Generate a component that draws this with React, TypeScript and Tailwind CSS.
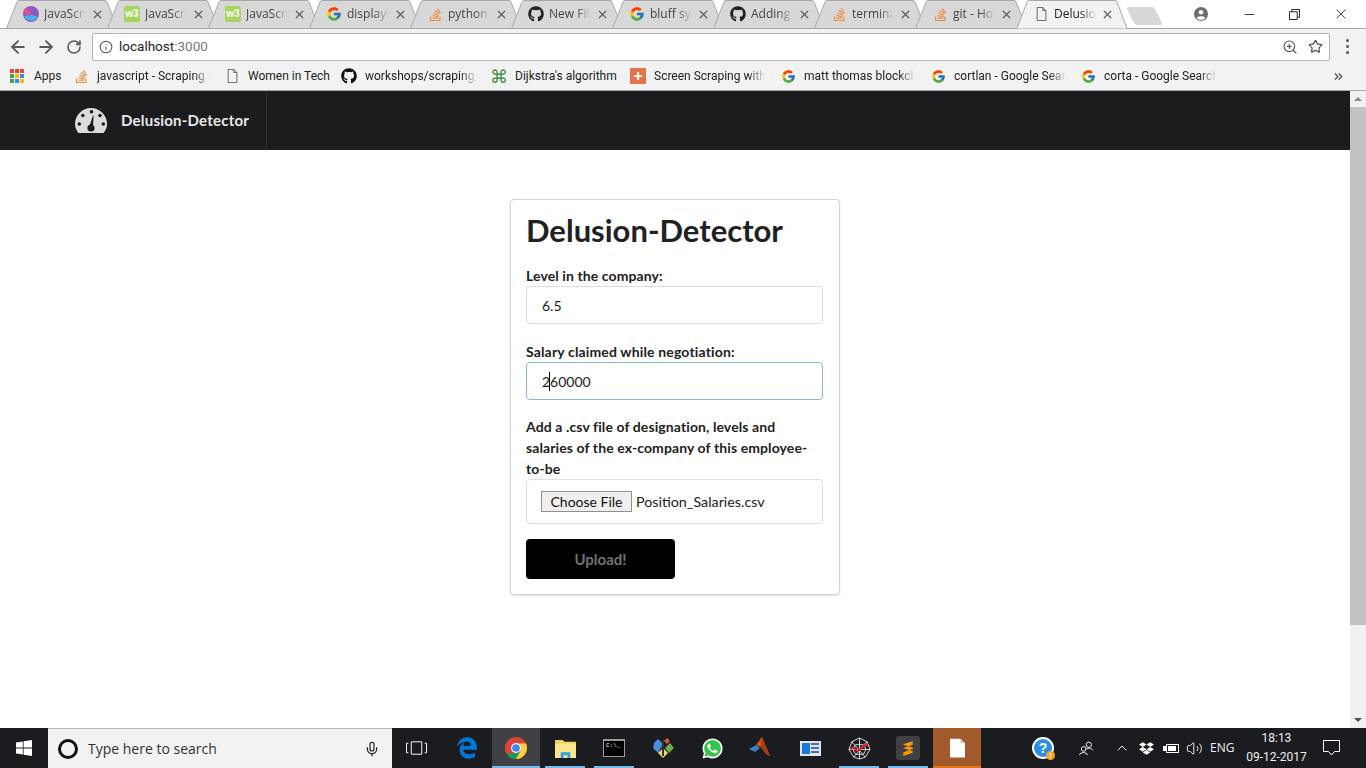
import type { ReactNode } from "react";
import { FaGithub, FaStackOverflow, FaWhatsapp, FaDropbox, FaEdgeLegacy } from "react-icons/fa";
import { FcGoogle } from "react-icons/fc";
import { ArrowLeft, ArrowRight, RotateCw, Info, ZoomIn, Star, X, Minus, Mic, ChevronUp, Volume2, ChevronsRight } from "lucide-react";

const W3 = () => (
  <span className="w-4 h-4 bg-[#a5d65f] rounded-[2px] flex items-center justify-center text-white text-[10px] font-bold leading-none font-['Liberation_Sans',sans-serif]">w3</span>
);

const Doc = ({ className }: { className: string }) => (
  <svg viewBox="0 0 12 16" className={className} fill="none" stroke="#555" strokeWidth="1">
    <path d="M1 .5h6.500L11 4v11.500H1z" />
    <path d="M7.500.5V4H11" />
  </svg>
);

const Chromium = ({ size }: { size: string }) => (
  <svg viewBox="0 0 24 24" className={size}>
    <circle cx="12" cy="12" r="12" fill="#db4437" />
    <path d="M12 12 1.600 18A12 12 0 0 0 12 24l6-6z" fill="#0f9d58" />
    <path d="M12 7h10.900A12 12 0 0 1 12 24l5-9z" fill="#ffcd40" />
    <path d="M1.600 6 7 15l5 3-10.400 0A12 12 0 0 1 1.600 6z" fill="#db4437" />
    <circle cx="12" cy="12" r="5.400" fill="#fff" />
    <circle cx="12" cy="12" r="4.200" fill="#4285f4" />
  </svg>
);

const Crystal = () => (
  <svg viewBox="0 0 16 16" className="w-4 h-4">
    <circle cx="8" cy="8" r="8" fill="#8e5bc4" />
    <path d="M1 10a8 8 0 0 0 14 1L9 9z" fill="#3fb4ea" />
    <path d="M4 1.500 8 7 3 9 0 7a8 8 0 0 1 4-5.500z" fill="#dd4f8a" />
  </svg>
);

type TabProps = { title: string; icon: ReactNode; active?: boolean };

const Tab = ({ title, icon, active }: TabProps) => (
  <div className={`relative w-[112px] h-[29px] -mr-[11px] shrink-0 ${active ? "z-10" : ""}`}>
    <svg viewBox="0 0 112 29" className="absolute inset-0 w-full h-full">
      <path
        d={active ? "M0 28.500h1L11 2q.6-1.500 2-1.500h86q1.500 0 2 1.500l10 26.500h1" : "M0.500 28.500 11 2q.6-1.500 2-1.500h86q1.500 0 2 1.500l10.500 26.500z"}
        fill={active ? "#f2f2f2" : "#d8d8d8"}
        stroke="#a8a8a8"
        strokeWidth="1"
      />
    </svg>
    <div className="relative flex items-center h-[28px] pl-[17px]">
      <span className="w-4 h-4 flex items-center justify-center shrink-0">{icon}</span>
      <span className={`ml-[5px] w-[42px] overflow-hidden whitespace-nowrap text-[12px] [mask-image:linear-gradient(to_right,#000_65%,transparent)] ${active ? "text-[#222]" : "text-[#444]"}`}>{title}</span>
      <X size={13} strokeWidth={2.5} className="ml-[5px] text-[#666] shrink-0" />
    </div>
  </div>
);

type MarkProps = { icon: ReactNode; label: string; className: string; fade?: boolean };

const Mark = ({ icon, label, className, fade }: MarkProps) => (
  <div className={`flex items-center shrink-0 ${className}`}>
    <span className="w-4 h-4 flex items-center justify-center shrink-0">{icon}</span>
    <span className={`ml-2 flex-1 overflow-hidden whitespace-nowrap text-[12px] text-[#222] font-['Roboto',sans-serif] ${fade ? "[mask-image:linear-gradient(to_right,#000_85%,transparent)]" : ""}`}>{label}</span>
  </div>
);

const TaskIcon = ({ children, className = "", bar }: { children: ReactNode; className?: string; bar?: string }) => (
  <div className={`relative w-[48px] mr-px h-full flex items-center justify-center shrink-0 ${className}`}>
    {children}
    {bar && <span className={`absolute bottom-0 h-[2px] ${bar}`} />}
  </div>
);

const Gauge = () => (
  <svg viewBox="0 0 32 25" className="w-8 h-[25px]">
    <path d="M3.500 25C1.300 22.300 0 19.300 0 16a16 16 0 0 1 32 0c0 3.300-1.300 6.300-3.500 9z" fill="#dcdcdc" />
    <g fill="#1b1c1d">
      <circle cx="16.500" cy="3.800" r="1.800" />
      <circle cx="7.800" cy="7.500" r="1.800" />
      <circle cx="25" cy="7.500" r="1.800" />
      <circle cx="4.300" cy="16" r="1.800" />
      <circle cx="28.300" cy="16" r="1.800" />
      <circle cx="16" cy="20" r="3.600" />
      <path d="M14.500 18 18 7.500l.6.2L18 19z" />
    </g>
  </svg>
);

const Field = ({ value, focused }: { value: string; focused?: boolean }) => (
  <div className="relative">
    <input
      readOnly
      value={value}
      className={`block w-full h-[38px] px-[15px] bg-white text-[14px] text-[#212121] rounded-[4px] border outline-none ${focused ? "border-[#85b7d9]" : "border-[#dededf]"}`}
    />
    {focused && <span className="absolute left-[23px] top-[10px] w-px h-[19px] bg-black" />}
  </div>
);

export default function App() {
  return (
    <div className="w-[1366px] h-[768px] overflow-hidden flex flex-col bg-white font-['Open_Sans',sans-serif]">
      {/* tab strip */}
      <div className="h-[28px] flex items-start pl-[6px] bg-white shrink-0 relative z-10">
        <Tab title="JavaScript" icon={<Crystal />} />
        <Tab title="JavaScript" icon={<W3 />} />
        <Tab title="JavaScript" icon={<W3 />} />
        <Tab title="displaying" icon={<FcGoogle size={16} />} />
        <Tab title="python" icon={<FaStackOverflow size={15} className="text-[#f08a3c]" />} />
        <Tab title="New File" icon={<FaGithub size={16} className="text-[#222]" />} />
        <Tab title="bluff sys" icon={<FcGoogle size={16} />} />
        <Tab title="Adding" icon={<FaGithub size={16} className="text-[#222]" />} />
        <Tab title="terminal" icon={<FaStackOverflow size={15} className="text-[#f08a3c]" />} />
        <Tab title="git - How" icon={<FaStackOverflow size={15} className="text-[#f08a3c]" />} />
        <Tab title="Delusion" icon={<Doc className="w-[11px] h-[14px]" />} active />
        <svg viewBox="0 0 36 18" className="w-9 h-[18px] mt-[7px] ml-[10px] shrink-0">
          <path d="M1 0h24q2 0 3 2l7 14q.5 2-1 2H10q-2 0-3-2L0 2q0-2 1-2z" fill="#d8d8d8" />
        </svg>
        <div className="ml-auto flex items-center h-[28px]">
          <svg viewBox="0 0 16 16" className="w-[14px] h-[14px] mr-[34px]">
            <circle cx="8" cy="8" r="8" fill="#6e6e6e" />
            <circle cx="8" cy="6" r="2.600" fill="#fff" />
            <path d="M3 12.500c1-2.500 9-2.500 10 0a6.500 6.500 0 0 1-10 0z" fill="#fff" />
          </svg>
          <Minus size={15} strokeWidth={1.2} className="text-black mr-[32px]" />
          <svg viewBox="0 0 12 12" className="w-[11px] h-[11px] mr-[33px]" fill="none" stroke="#111">
            <path d="M.5 3h8.500v8.500H.5z" />
            <path d="M3 3V.5h8.500V9H9" />
          </svg>
          <X size={16} strokeWidth={1.1} className="text-black mr-[17px]" />
        </div>
      </div>

      {/* toolbar */}
      <div className="h-[34px] pt-[2px] bg-[#f2f2f2] border-t border-[#a8a8a8] flex items-center shrink-0">
        <ArrowLeft size={20} strokeWidth={2.2} className="ml-[8px] text-[#5a5a5a]" />
        <ArrowRight size={20} strokeWidth={2.2} className="ml-[8px] text-[#5a5a5a]" />
        <RotateCw size={16} strokeWidth={2.4} className="ml-[10px] text-[#5a5a5a]" />
        <div className="ml-[10px] w-[1238px] h-[28px] bg-white border border-[#b4b4b4] rounded-[2px] flex items-center">
          <Info size={14} strokeWidth={1.8} className="ml-[6px] text-[#555]" />
          <span className="ml-[6px] text-[13.500px] text-[#222] font-['Roboto',sans-serif]">
            localhost<span className="text-[#777]">:3000</span>
          </span>
          <ZoomIn size={16} strokeWidth={1.7} className="ml-auto text-[#555]" />
          <Star size={15} strokeWidth={2} className="ml-[10px] mr-[6px] text-[#555]" />
        </div>
        <div className="ml-[16px] flex flex-col gap-[3px]">
          <span className="w-[3px] h-[3px] rounded-full bg-[#555]" />
          <span className="w-[3px] h-[3px] rounded-full bg-[#555]" />
          <span className="w-[3px] h-[3px] rounded-full bg-[#555]" />
        </div>
      </div>

      {/* bookmarks */}
      <div className="h-[29px] bg-[#f2f2f2] border-b border-[#a8a8a8] flex items-center pl-[10px] shrink-0">
        <div className="flex items-center w-[63px] shrink-0">
          <div className="grid grid-cols-3 gap-[1px] w-[14px]">
            <span className="h-[4px] bg-[#ea4335]" /><span className="h-[4px] bg-[#ea4335]" /><span className="h-[4px] bg-[#ea4335]" />
            <span className="h-[4px] bg-[#34a853]" /><span className="h-[4px] bg-[#fbbc05]" /><span className="h-[4px] bg-[#4285f4]" />
            <span className="h-[4px] bg-[#34a853]" /><span className="h-[4px] bg-[#4285f4]" /><span className="h-[4px] bg-[#fbbc05]" />
          </div>
          <span className="ml-[10px] text-[12px] text-[#222] font-['Roboto',sans-serif]">Apps</span>
        </div>
        <Mark className="w-[151px] pr-[14px]" fade icon={<FaStackOverflow size={15} className="text-[#f08a3c]" />} label="javascript - Scraping a" />
        <Mark className="w-[117px]" icon={<Doc className="w-[11px] h-[14px]" />} label="Women in Tech" />
        <Mark className="w-[150px] pr-[14px]" fade icon={<FaGithub size={16} className="text-[#111]" />} label="workshops/scraping_" />
        <Mark className="w-[139px] pr-[13px]" icon={<span className="text-[18px] leading-none text-[#3c8f3c]">⌘</span>} label="Dijkstra's algorithm" />
        <Mark
          className="w-[150px] pr-[15px]"
          fade
          icon={<span className="w-4 h-4 bg-[#e2764a] flex items-center justify-center text-white text-[16px] font-bold leading-none">+</span>}
          label="Screen Scraping with"
        />
        <Mark className="w-[150px] pr-[15px]" fade icon={<FcGoogle size={15} />} label="matt thomas blockchain" />
        <Mark className="w-[150px] pr-[14px]" fade icon={<FcGoogle size={15} />} label="cortlan - Google Search" />
        <Mark className="w-[136px]" fade icon={<FcGoogle size={15} />} label="corta - Google Search" />
        <ChevronsRight size={13} strokeWidth={2.4} className="ml-[116px] text-[#555]" />
      </div>

      {/* page */}
      <div className="flex-1 flex min-h-0">
        <div className="flex-1 flex flex-col min-w-0 font-['Lato',sans-serif]">
          <nav className="h-[59px] bg-[#1b1c1d] flex shrink-0">
            <div className="w-[267px] h-full border-r border-[#2f3031] pl-[75px] flex items-center">
              <Gauge />
              <span className="ml-[14px] text-[15px] tracking-[0.22px] font-bold text-[#e8e8e8]">Delusion-Detector</span>
            </div>
          </nav>
          <div className="flex justify-center pt-[49px]">
            <div className="w-[330px] h-[396px] pl-[15px] pr-[16px] pt-[10px] bg-white border border-[#d4d4d5] rounded-[4px] shadow-[0_1px_2px_rgba(34,36,38,0.15)] text-[#212121]">
              <h1 className="text-[31px] leading-[41px] font-bold">Delusion-Detector</h1>
              <label className="block mt-[16px] mb-[1px] text-[14px] tracking-[0.1px] leading-[18px] font-bold">Level in the company:</label>
              <Field value="6.5" />
              <label className="block mt-[19px] mb-[1px] text-[14px] tracking-[0.15px] leading-[18px] font-bold">Salary claimed while negotiation:</label>
              <Field value="260000" focused />
              <label className="block mt-[16px] -mr-[2px] text-[14px] tracking-[0.1px] leading-[21px] font-bold">
                Add a .csv file of designation, levels and
                <br />
                salaries of the ex-company of this employee-
                <br />
                to-be
              </label>
              <div className="h-[45px] border border-[#dededf] rounded-[4px] pl-[14px] flex items-center text-[14.300px]">
                <span className="h-[21px] w-[91px] flex items-center justify-center bg-[#efefef] border border-[#8f8f8f] text-[14px] text-[#111]">Choose File</span>
                <span className="ml-[4px]">Position_Salaries.csv</span>
              </div>
              <button className="block mt-[15px] w-[149px] h-[40px] bg-black rounded-[4px] text-[15px] font-bold text-white/45">Upload!</button>
            </div>
          </div>
        </div>

        {/* scrollbar */}
        <div className="w-4 bg-[#f1f1f1] flex flex-col items-center shrink-0">
          <div className="h-[16px] flex items-center justify-center">
            <span className="w-0 h-0 border-x-[4px] border-x-transparent border-b-[4px] border-b-[#8a8a8a]" />
          </div>
          <div className="w-full h-[518px] bg-[#c1c1c1]" />
          <div className="mt-auto h-[16px] flex items-center justify-center">
            <span className="w-0 h-0 border-x-[4px] border-x-transparent border-t-[4px] border-t-[#505050]" />
          </div>
        </div>
      </div>

      {/* taskbar */}
      <div className="h-[40px] bg-[#1b1c20] flex items-center shrink-0 text-white">
        <div className="w-[48px] h-full flex items-center justify-center shrink-0">
          <svg viewBox="0 0 16 16" className="w-4 h-4" fill="#fff">
            <path d="M0 2.400 6.800 1.400V7.600H0zM7.600 1.300 16 0V7.600H7.600zM0 8.400H6.800V14.600L0 13.600zM7.600 8.400H16V16L7.600 14.700z" />
          </svg>
        </div>
        <div className="w-[344px] h-full bg-[#f2f2f2] border-t border-[#b8b8b8] flex items-center pl-[10px] text-black shrink-0">
          <span className="w-[20px] h-[20px] rounded-full border-[3px] border-[#111]" />
          <span className="ml-[10px] text-[14px] text-[#333]">Type here to search</span>
          <Mic size={16} strokeWidth={1.8} className="ml-auto mr-[12px] text-[#222]" />
        </div>
        <TaskIcon>
          <svg viewBox="0 0 22 14" className="w-[21px] h-[14px]" fill="none" stroke="#fff">
            <path d="M5.500.5h11v13h-11zM2.500 2H.5v10h2M19.500 2h2v10h-2" />
          </svg>
        </TaskIcon>
        <TaskIcon className="ml-[2px]"><FaEdgeLegacy size={22} className="text-[#0078d7]" /></TaskIcon>
        <TaskIcon className="bg-[#404144]" bar="inset-x-0 bg-[#76b9ed]"><Chromium size="w-[22px] h-[22px]" /></TaskIcon>
        <TaskIcon bar="left-[4px] w-[40px] bg-[#76b9ed]">
          <svg viewBox="0 0 22 20" className="w-[21px] h-[19px]">
            <path d="M0 1h8l2 2h12v17H0z" fill="#f6d365" />
            <path d="M0 5h22v15H0z" fill="#fbe58f" />
            <path d="M6 14h10v6h-3v-3H9v3H6z" fill="#2f9fe0" />
          </svg>
        </TaskIcon>
        <TaskIcon bar="left-[4px] w-[40px] bg-[#76b9ed]">
          <div className="w-[22px] h-[18px] bg-black border border-[#9a9a9a] border-t-[2px] flex items-start pl-[2px] pt-[2px]">
            <span className="text-[6px] leading-none text-white font-['Liberation_Mono',monospace]">C:\_</span>
          </div>
        </TaskIcon>
        <TaskIcon>
          <svg viewBox="0 0 24 24" className="w-6 h-6">
            <path d="M12 8 7 3 3 7l-1 5 5 5z" fill="#4a90d9" />
            <path d="M12 12 7 17l5 5 5-5z" fill="#f3d36b" />
            <path d="M13 5l3-3 3 3-3 3z" fill="#d9534f" />
            <path d="M14 12l5-5 4 5-5 5z" fill="#6fae45" />
            <path d="M11 4h2v16h-2z" fill="#333" />
          </svg>
        </TaskIcon>
        <TaskIcon>
          <span className="relative w-[21px] h-[21px] flex items-center justify-center">
            <span className="absolute inset-[1px] rounded-full bg-[#35c44a]" />
            <FaWhatsapp size={23} className="text-white absolute" />
          </span>
        </TaskIcon>
        <TaskIcon>
          <svg viewBox="0 0 24 22" className="w-6 h-[22px]">
            <path d="M0 12 7 8l4 3-5 4z" fill="#3d7fc4" />
            <path d="M7 8l6-8 8 19-4-2-5-7z" fill="#d9541e" />
            <path d="M13 0l-1 10 5 7 4 2z" fill="#a83a12" />
          </svg>
        </TaskIcon>
        <TaskIcon>
          <div className="w-[21px] h-[15px] bg-[#dfe6ee] flex items-center gap-[1px] px-[2px]">
            <span className="w-[8px] h-[11px] bg-[#1a7ad9]" />
            <span className="flex-1 flex flex-col gap-[2px]">
              <span className="h-[2px] bg-[#4a6fa5]" /><span className="h-[2px] bg-[#4a6fa5]" /><span className="h-[2px] bg-[#4a6fa5]" />
            </span>
          </div>
        </TaskIcon>
        <TaskIcon bar="left-[4px] w-[40px] bg-[#76b9ed]">
          <svg viewBox="0 0 24 24" className="w-[23px] h-[23px]" fill="none" stroke="#ddd" strokeWidth="1">
            <path d="M12 1 20 5l3 8-5 8-6 2-6-2-5-8 3-8zM12 1v22M4 5l14 16M20 5 6 21M1 13h22M8 8h8l3 5-3 5H8l-3-5z" />
            <path d="M3 13c3-5 5 3 8 1s4-6 10-6" stroke="#e0212f" strokeWidth="2.200" />
          </svg>
        </TaskIcon>
        <TaskIcon bar="left-[4px] w-[40px] bg-[#76b9ed]">
          <div className="w-6 h-6 rounded-[3px] bg-[#3f4042] flex items-center justify-center">
            <svg viewBox="0 0 12 16" className="w-[12px] h-[15px]" fill="#ff9800">
              <path d="M11 0v4L1 7.500V3.500zM1 7.500l10 3.500V7L1 4zM11 8.500v4L1 16v-4z" />
            </svg>
          </div>
        </TaskIcon>
        <TaskIcon className="bg-[#a05a2c]" bar="inset-x-0 bg-[#e8741a]">
          <svg viewBox="0 0 16 20" className="w-[15px] h-[20px]">
            <path d="M0 0h11l5 5v15H0z" fill="#fff" />
            <path d="M11 0v5h5z" fill="#ccc" />
          </svg>
        </TaskIcon>

        {/* tray */}
        <div className="ml-[50px] w-[22px] h-[22px] relative flex items-center justify-center rounded-full bg-[#2a8fe0] border-2 border-white shrink-0">
          <span className="text-white text-[14px] font-bold leading-none font-['Liberation_Sans',sans-serif]">?</span>
          <span className="absolute -right-[3px] -bottom-[3px] w-[9px] h-[9px] rounded-full bg-[#f5a623] text-white text-[7px] leading-[9px] text-center font-bold">!</span>
        </div>
        <svg viewBox="0 0 16 16" className="ml-[25px] w-[15px] h-[15px] shrink-0" fill="none" stroke="#fff" strokeWidth="1">
          <circle cx="10.500" cy="4" r="2.800" />
          <path d="M7.500 9c1-1.800 5.500-2 7.500 1" />
          <circle cx="5" cy="8.500" r="2.500" />
          <path d="M.5 15c.5-3.500 8-3.500 8.500 0" />
        </svg>
        <ChevronUp size={16} strokeWidth={1.4} className="ml-[20px] text-white shrink-0" />
        <FaDropbox size={15} className="ml-[9px] text-white shrink-0" />
        <div className="ml-[9px] flex items-center shrink-0">
          <span className="w-[3px] h-[5px] bg-white" />
          <span className="w-[13px] h-[9px] border border-white flex p-px">
            <span className="w-[8px] bg-white" />
          </span>
        </div>
        <Volume2 size={17} strokeWidth={1.3} className="ml-[7px] text-white shrink-0" />
        <span className="ml-[7px] text-[12px] text-[#eee]">ENG</span>
        <div className="ml-[10px] w-[64px] flex flex-col items-center text-[12px] leading-[19px] text-[#eee] font-['Roboto',sans-serif] shrink-0">
          <span>18:13</span>
          <span>09-12-2017</span>
        </div>
        <svg viewBox="0 0 17 16" className="ml-[15px] w-[17px] h-[16px] shrink-0" fill="none" stroke="#fff">
          <path d="M.5.500h16v11h-5l-3 3.500-3-3.500h-5z" />
        </svg>
      </div>
    </div>
  );
}
